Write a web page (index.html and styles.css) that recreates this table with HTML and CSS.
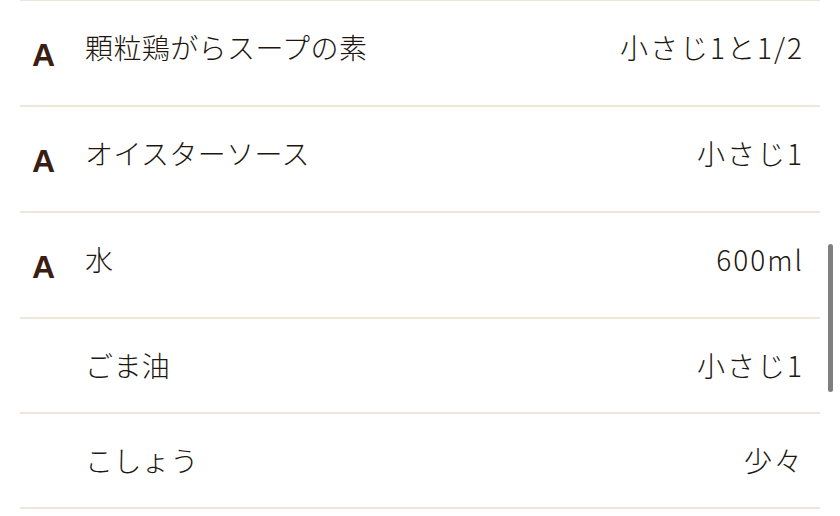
FILE: index.html
```html
<!DOCTYPE html>
<html lang="ja">
<head>
<meta charset="utf-8">
<link rel="stylesheet" href="styles.css">
</head>
<body>
<ul class="list">
  <li class="row"><span class="mark">A</span><span class="name">顆粒鶏がらスープの素</span><span class="amount">小さじ1と1/2</span></li>
  <li class="row"><span class="mark">A</span><span class="name">オイスターソース</span><span class="amount">小さじ1</span></li>
  <li class="row"><span class="mark">A</span><span class="name">水</span><span class="amount">600ml</span></li>
  <li class="row"><span class="mark"></span><span class="name">ごま油</span><span class="amount">小さじ1</span></li>
  <li class="row"><span class="mark"></span><span class="name">こしょう</span><span class="amount">少々</span></li>
</ul>
<div class="scrollbar"></div>
</body>
</html>
```

FILE: styles.css
```css
html, body {
  margin: 0;
  padding: 0;
  background: #ffffff;
  width: 840px;
  height: 516px;
  overflow: hidden;
}
body {
  font-family: "Noto Sans CJK JP", sans-serif;
  color: #21160f;
  position: relative;
}
.list {
  list-style: none;
  margin: -1px 20px 0 20px;
  padding: 0;
  border-top: 2px solid #eee6d8;
}
.row {
  display: flex;
  align-items: flex-start;
  padding: 30px 18px 30px 12px;
  border-bottom: 2px solid #eee6d8;
}
.mark {
  width: 53px;
  flex: none;
  font-family: "Liberation Sans", Arial, sans-serif;
  font-weight: 700;
  font-size: 32px;
  line-height: 33px;
  color: #3b1e13;
  margin: 8px 0 3px 0;
}
.mark:empty {
  margin: 0;
  height: 33px;
}
.name {
  flex: 1;
  font-size: 28px;
  line-height: 33px;
  font-weight: 300;
  letter-spacing: 0.4px;
}
.amount {
  font-size: 28px;
  line-height: 33px;
  font-weight: 300;
  text-align: right;
  letter-spacing: 2px;
  margin-right: -2px;
}
.scrollbar {
  position: absolute;
  left: 828px;
  top: 244px;
  width: 5px;
  height: 148px;
  border-radius: 3px;
  background: #7f7f7f;
}
```
